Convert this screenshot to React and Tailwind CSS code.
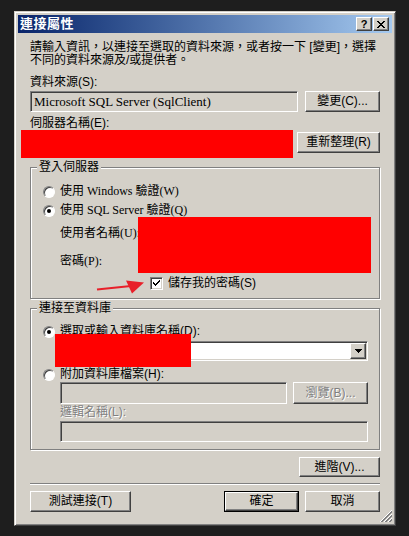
import React from "react";

const raised =
  "bg-[#d4d0c8] border border-t-white border-l-white border-r-[#404040] border-b-[#404040] shadow-[inset_-1px_-1px_0_#808080]";
const sunken =
  "border border-t-[#808080] border-l-[#808080] border-r-white border-b-white shadow-[inset_1px_1px_0_#404040,inset_-1px_-1px_0_#d4d0c8]";
const etched = "border border-[#808080] shadow-[1px_1px_0_#fff,inset_1px_1px_0_#fff]";
const serif = "font-['Liberation_Serif','Noto_Sans_CJK_TC',serif]";
const dim = "text-[#808080] [text-shadow:1px_1px_0_#fff]";

function Button({ className = "", children, disabled, isDefault }) {
  if (isDefault) {
    return (
      <div className={`border border-black flex ${className}`}>
        <div className={`flex-1 flex items-center justify-center ${raised}`}>{children}</div>
      </div>
    );
  }
  return (
    <div className={`flex items-center justify-center ${raised} ${disabled ? dim : ""} ${className}`}>
      {children}
    </div>
  );
}

function Radio({ checked }) {
  return (
    <span className="w-[12px] h-[12px] shrink-0 rounded-full bg-white border border-t-[#808080] border-l-[#808080] border-r-white border-b-white shadow-[inset_1px_1px_0_#404040] flex items-center justify-center">
      {checked && <span className="w-[4px] h-[4px] rounded-full bg-black" />}
    </span>
  );
}

function Checkbox() {
  return (
    <span className={`w-[13px] h-[13px] shrink-0 bg-white flex items-center justify-center ${sunken}`}>
      <svg width="9" height="9" viewBox="0 0 9 9" shapeRendering="crispEdges">
        <path d="M1 3h1v1h1v1h1V4h1V3h1V2h1V1h1v2H7v1H6v1H5v1H4v1H3V6H2V5H1z" fill="#000" />
      </svg>
    </span>
  );
}

function Group({ title, className = "", children }) {
  return (
    <div className={`relative flex flex-col pl-[12px] ${etched} ${className}`}>
      <span className="absolute -top-[7px] left-[6px] px-[2px] bg-[#d4d0c8] leading-[13px]">{title}</span>
      {children}
    </div>
  );
}

export default function App() {
  return (
    <div className="w-[409px] h-[536px] bg-[#1e1e1e] pt-[11px] pl-[14px] font-['Liberation_Sans','Noto_Sans_CJK_TC',sans-serif] text-[12px] leading-[13px] text-black">
      <div className="relative w-[382px] h-[515px] bg-[#d4d0c8] p-[3px] flex flex-col border border-t-[#d4d0c8] border-l-[#d4d0c8] border-r-[#404040] border-b-[#404040] shadow-[inset_1px_1px_0_#fff,inset_-1px_-1px_0_#808080]">
        {/* title bar */}
        <div className="h-[18px] flex items-center justify-between pl-[2px] pr-[3px] bg-linear-to-r from-[#0a246a] to-[#a6caf0]">
          <span className="text-white font-bold text-[13px] leading-[16px] tracking-[0.5px]">連接屬性</span>
          <div className="flex gap-[1px]">
            <div className={`w-[16px] h-[14px] flex items-center justify-center ${raised}`}>
              <span className="font-bold text-[11px] leading-[11px]">?</span>
            </div>
            <div className={`w-[16px] h-[14px] flex items-center justify-center ${raised}`}>
              <svg width="8" height="7" viewBox="0 0 8 7" shapeRendering="crispEdges">
                <path d="M0 0h2v1h1v1h2V1h1V0h2v1H7v1H6v1H5v1h1v1h1v1h1v1H6V6H5V5H3v1H2v1H0V6h1V5h1V4h1V3H2V2H1V1H0z" fill="#000" />
              </svg>
            </div>
          </div>
        </div>

        {/* body */}
        <div className="flex-1 flex flex-col px-[12px]">
          <p className="mt-[8px]">
            請輸入資訊，以連接至選取的資料來源，或者按一下 [變更]，選擇
            <br />
            不同的資料來源及/或提供者。
          </p>

          <div className="mt-[9px] h-[13px]">資料來源(S):</div>
          <div className="mt-[2px] h-[21px] flex gap-[7px]">
            <div className={`flex-1 flex items-center pl-[3px] text-[13px] ${sunken} ${serif}`}>Microsoft SQL Server (SqlClient)</div>
            <Button className="w-[75px]">變更(C)...</Button>
          </div>

          <div className="mt-[5px] h-[13px]">伺服器名稱(E):</div>
          <div className="relative mt-[2px] h-[21px] flex gap-[6px]">
            <div className={`flex-1 bg-white ${sunken}`} />
            <Button className="w-[83px]">重新整理(R)</Button>
            <div className="absolute -left-[9px] -top-[2px] w-[272px] h-[28px] bg-[#ff0000]" />
          </div>

          <Group title="登入伺服器" className="mt-[14px] h-[132px]">
            <div className={`mt-[17px] h-[13px] flex items-center gap-[5px] ${serif}`}>
              <Radio />
              <span>使用 Windows 驗證(W)</span>
            </div>
            <div className={`mt-[6px] h-[13px] flex items-center gap-[5px] ${serif}`}>
              <Radio checked />
              <span>使用 SQL Server 驗證(Q)</span>
            </div>
            <div className={`mt-[6px] h-[21px] ml-[17px] flex items-center ${serif}`}>
              <span className="w-[90px]">使用者名稱(U):</span>
              <div className={`w-[217px] h-full bg-white ${sunken}`} />
            </div>
            <div className={`mt-[7px] h-[21px] ml-[17px] flex items-center ${serif}`}>
              <span className="w-[90px]">密碼(P):</span>
              <div className={`w-[217px] h-full bg-white ${sunken}`} />
            </div>
            <div className="mt-[5px] h-[13px] ml-[107px] flex items-center gap-[5px]">
              <Checkbox />
              <span>儲存我的密碼(S)</span>
            </div>
            <div className="absolute left-[107px] top-[49px] w-[233px] h-[56px] bg-[#ff0000]" />
            <svg className="absolute left-[64px] top-[108px]" width="52" height="20" viewBox="0 0 52 20">
              <path d="M2 13.5 L36 10" stroke="#e8202a" strokeWidth="2.2" fill="none" />
              <path d="M31 4.5 L49 6.5 L37 17.5 Z" fill="#e8202a" />
            </svg>
          </Group>

          <Group title="連接至資料庫" className="mt-[9px] h-[142px]">
            <div className="mt-[16px] h-[13px] flex items-center gap-[5px]">
              <Radio checked />
              <span>選取或輸入資料庫名稱(D):</span>
            </div>
            <div className={`mt-[3px] ml-[17px] w-[308px] h-[20px] bg-white flex justify-end items-center pr-[1px] ${sunken}`}>
              <div className={`w-[16px] h-[16px] flex items-center justify-center ${raised}`}>
                <svg width="7" height="4" viewBox="0 0 7 4" shapeRendering="crispEdges">
                  <path d="M0 0h7v1H6v1H5v1H4v1H3V3H2V2H1V1H0z" fill="#000" />
                </svg>
              </div>
            </div>
            <div className="mt-[7px] h-[13px] flex items-center gap-[5px]">
              <Radio />
              <span>附加資料庫檔案(H):</span>
            </div>
            <div className="mt-[1px] ml-[17px] h-[22px] flex gap-[6px]">
              <div className={`w-[227px] ${sunken}`} />
              <Button disabled className="w-[75px]">瀏覽(B)...</Button>
            </div>
            <div className={`mt-[2px] ml-[17px] h-[13px] ${dim}`}>邏輯名稱(L):</div>
            <div className={`mt-[2px] ml-[17px] w-[308px] h-[21px] ${sunken}`} />
            <div className="absolute left-[24px] top-[25px] w-[136px] h-[33px] bg-[#ff0000]" />
          </Group>

          <div className="mt-[7px] flex justify-end">
            <Button className="w-[81px] h-[20px]">進階(V)...</Button>
          </div>

          <div className="mt-[6px] h-[2px] border-t border-t-[#808080] border-b border-b-white" />

          <div className="mt-[6px] h-[21px] flex">
            <Button className="w-[101px]">測試連接(T)</Button>
            <div className="flex-1" />
            <Button isDefault className="w-[75px]">確定</Button>
            <Button className="w-[75px] ml-[6px]">取消</Button>
          </div>
        </div>

        <svg className="absolute right-[3px] bottom-[3px]" width="12" height="12" viewBox="0 0 12 12" shapeRendering="crispEdges">
          <path d="M12 0L0 12M12 4L4 12M12 8L8 12" stroke="#fff" strokeWidth="1" />
          <path d="M12 1L1 12M12 2L2 12M12 5L5 12M12 6L6 12M12 9L9 12M12 10L10 12" stroke="#808080" strokeWidth="1" />
        </svg>
      </div>
    </div>
  );
}
